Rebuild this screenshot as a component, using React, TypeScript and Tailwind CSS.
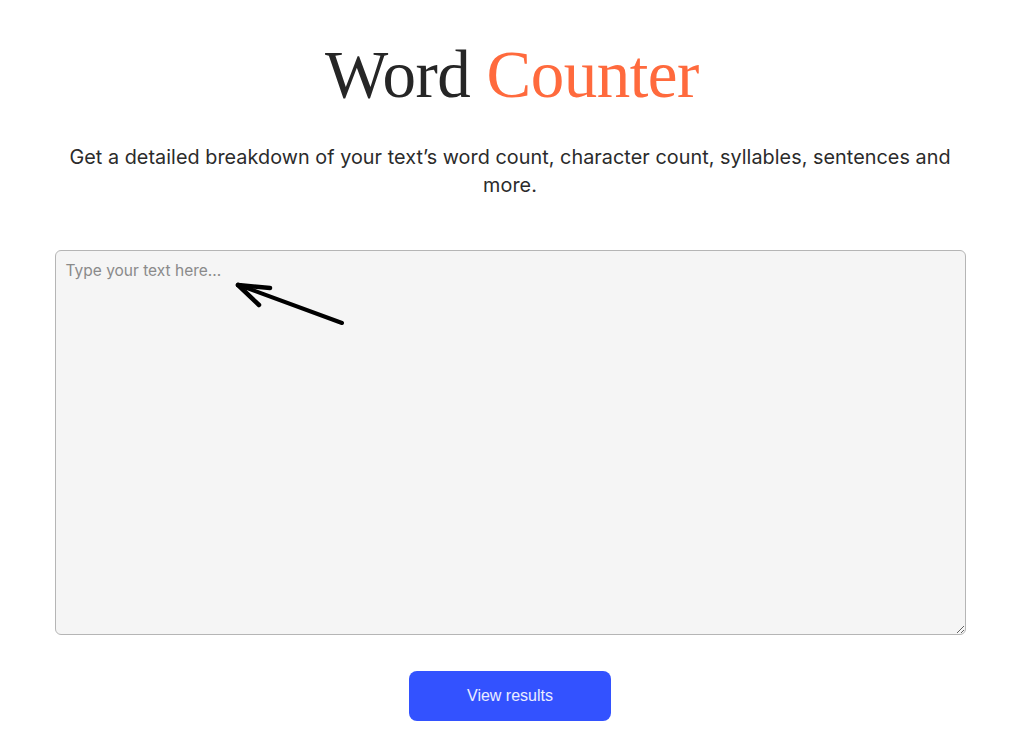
import React, { useState } from 'react';

// Hand-drawn pointer next to the placeholder
const ScribbleArrow: React.FC = () => (
    <svg
        className="pointer-events-none absolute left-[125px] top-[30px]"
        width="170"
        height="60"
        viewBox="0 0 170 60"
        fill="none"
    >
        <path d="M162 43 L59 5" stroke="#000" strokeWidth="4" strokeLinecap="round" />
        <path d="M58 5 L90 8" stroke="#000" strokeWidth="4.5" strokeLinecap="round" />
        <path d="M58 5 L79 25" stroke="#000" strokeWidth="4.5" strokeLinecap="round" />
    </svg>
);

const App: React.FC = () => {
    const [text, setText] = useState('');

    return (
        <div className="min-h-[746px] bg-white flex flex-col items-center font-['Liberation_Sans',Arial,sans-serif]">
            <h1 className="mt-[34px] text-[67px] leading-[80px] font-['Liberation_Serif','Times_New_Roman',serif] text-[#262626] tracking-[-0.5px]">
                Word <span className="text-[#ff6a3d]">Counter</span>
            </h1>

            <p className="mt-[29px] w-[900px] -translate-x-[2px] text-center text-[19.8px] leading-[28px] text-[#2b2b2b] font-['Inter',sans-serif] tracking-[0.05px]">
                Get a detailed breakdown of your text’s word count, character count, syllables, sentences and more.
            </p>

            <div className="relative mt-[51px] w-[911px] -translate-x-[2px]">
                <textarea
                    value={text}
                    onChange={e => setText(e.target.value)}
                    placeholder="Type your text here..."
                    className="block w-full h-[385px] rounded-[6px] border border-[#b5b5b5] bg-[#f5f5f5] px-[10px] py-[8px] text-[15.5px] text-[#333] placeholder:text-[#8a8a8a] font-['Inter',sans-serif] outline-none"
                />
                <ScribbleArrow />
            </div>

            <button className="mt-[36px] w-[202px] h-[50px] rounded-[8px] bg-[#3352ff] text-white/90 text-[16px] -translate-x-[2px]">
                View results
            </button>
        </div>
    );
};

export default App;
